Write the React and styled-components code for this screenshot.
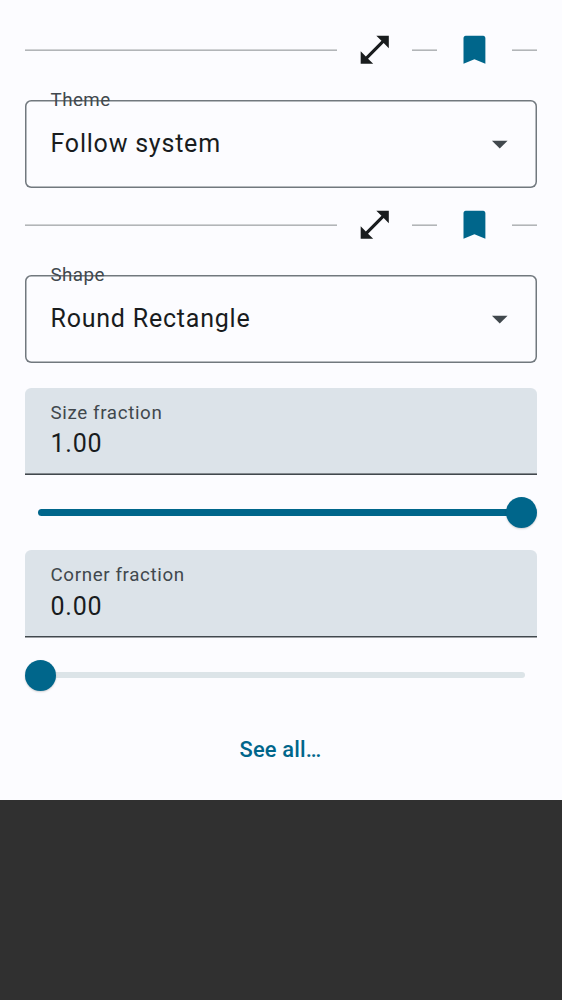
import React from 'react';
import styled, { createGlobalStyle } from 'styled-components';

const color = {
  surface: '#fcfcff',
  text: '#191c1e',
  muted: '#41484d',
  outline: '#71787e',
  fill: '#dce3e9',
  primary: '#00668b',
  track: '#dce4e8',
};

const GlobalStyle = createGlobalStyle`
  *, *::before, *::after { box-sizing: border-box; }
  body {
    margin: 0;
    background: #303030;
    font-family: Roboto, "Liberation Sans", sans-serif;
  }
`;

const Panel = styled.main`
  width: 562px;
  height: 800px;
  padding: 12.5px 25px 0;
  background: ${color.surface};
  color: ${color.text};
  overflow: hidden;
`;

const ActionRow = styled.div`
  display: flex;
  align-items: center;
  height: 75px;
`;

const Line = styled.span`
  flex: ${({ $short }) => ($short ? '0 0 25px' : '1')};
  height: 2px;
  background: linear-gradient(#d0d2d4 50%, #b2b5b8 50%);
`;

const IconButton = styled.button`
  display: flex;
  flex: none;
  align-items: center;
  justify-content: center;
  width: 75px;
  height: 75px;
  padding: 0;
  border: 0;
  background: none;
  color: ${({ $active }) => ($active ? color.primary : color.text)};

  svg {
    width: 37.5px;
    height: 37.5px;
    fill: currentColor;
  }
`;

const Select = styled.div`
  position: relative;
  display: flex;
  align-items: center;
  justify-content: space-between;
  height: 87.5px;
  margin-top: 12.5px;
  padding: 0 18.75px 0 25.5px;
  border-radius: 6.25px;
  box-shadow: inset 0 0 0 1.5px ${color.outline};

  svg {
    width: 37.5px;
    height: 37.5px;
    fill: ${color.muted};
  }
`;

const Value = styled.span`
  font-size: 25px;
  line-height: 37.5px;
  letter-spacing: 0.78px;
`;

const Label = styled.span`
  color: ${color.muted};
  font-size: 18.75px;
  line-height: 25px;
  letter-spacing: 0.63px;
`;

const FloatingLabel = styled(Label)`
  position: absolute;
  left: 25.5px;
  top: -12px;
  letter-spacing: 0.45px;
`;

const Field = styled.div`
  display: flex;
  flex-direction: column;
  height: 87.5px;
  padding: 13px 25.5px 0;
  border-radius: 6.25px 6.25px 0 0;
  background:
    linear-gradient(${({ $edge }) => $edge}) bottom / 100% 2px no-repeat,
    ${color.fill};

  ${Value} {
    margin-top: -0.5px;
  }
`;

const Fields = styled.section`
  padding-top: 25px;
`;

const Slider = styled.div`
  display: flex;
  align-items: center;
  position: relative;
  height: 75px;
  padding: 0 12.5px;
`;

const Track = styled.div`
  width: 100%;
  height: 6.25px;
  border-radius: 4px;
  background: ${({ $full }) => ($full ? color.primary : color.track)};
`;

const Thumb = styled.div`
  position: absolute;
  top: 22px;
  ${({ $full }) => ($full ? 'right: 0;' : 'left: 0;')}
  width: 31.25px;
  height: 31.25px;
  border-radius: 50%;
  background: ${color.primary};
  box-shadow: 0 1px 2px rgba(0, 0, 0, 0.18);
`;

const SeeAll = styled.button`
  display: block;
  width: 100%;
  height: 75px;
  padding: 0 1px 2px 0;
  border: 0;
  background: none;
  color: ${color.primary};
  font: 500 21.875px/31px Roboto, "Liberation Sans", sans-serif;
  letter-spacing: 0.16px;
`;

function Actions() {
  return (
    <ActionRow>
      <Line />
      <IconButton aria-label="Expand">
        <svg viewBox="0 0 24 24">
          <path d="M21 11V3h-8l3.29 3.29-10 10L3 13v8h8l-3.29-3.29 10-10z" />
        </svg>
      </IconButton>
      <Line $short />
      <IconButton $active aria-label="Bookmark">
        <svg viewBox="0 0 24 24">
          <path d="M17.4 3H6.2C5.4 3 4.8 3.7 4.8 4.6V21l7-3 7 3V4.6c0-.9-.6-1.6-1.4-1.6z" />
        </svg>
      </IconButton>
      <Line $short />
    </ActionRow>
  );
}

function Dropdown({ label, value }) {
  return (
    <Select>
      <FloatingLabel>{label}</FloatingLabel>
      <Value>{value}</Value>
      <svg viewBox="0 0 24 24">
        <path d="M7 10l5 5 5-5z" />
      </svg>
    </Select>
  );
}

function RangeField({ label, value, full, edge }) {
  return (
    <>
      <Field $edge={edge}>
        <Label>{label}</Label>
        <Value>{value}</Value>
      </Field>
      <Slider>
        <Track $full={full} />
        <Thumb $full={full} />
      </Slider>
    </>
  );
}

export default function App() {
  return (
    <>
      <GlobalStyle />
      <Panel>
        <Actions />
        <Dropdown label="Theme" value="Follow system" />
        <Actions />
        <Dropdown label="Shape" value="Round Rectangle" />
        <Fields>
          <RangeField label="Size fraction" value="1.00" full edge="#83898e 50%, #41484d 50%" />
          <RangeField label="Corner fraction" value="0.00" edge="#41484d 50%, #9fa2a6 50%" />
        </Fields>
        <SeeAll>See all…</SeeAll>
      </Panel>
    </>
  );
}
